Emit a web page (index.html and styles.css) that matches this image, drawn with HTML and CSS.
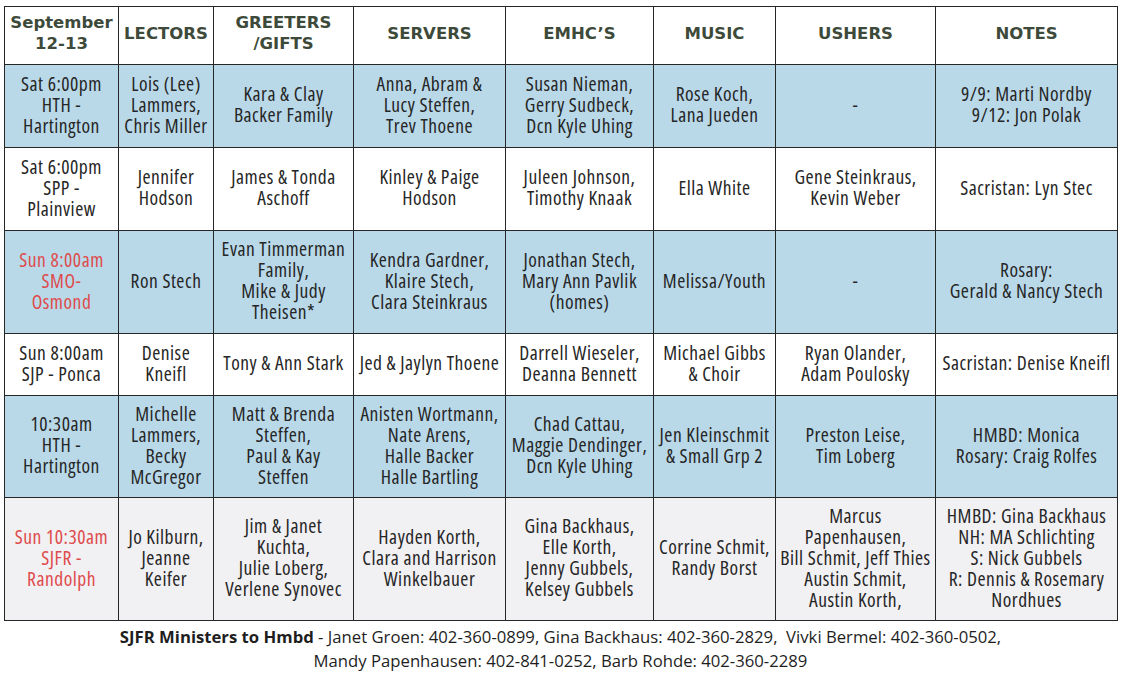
FILE: index.html
```html
<!DOCTYPE html>
<html>
<head>
<meta charset="utf-8">
<link rel="stylesheet" href="styles.css">
</head>
<body>
<div class="page">
<table class="sched">
  <colgroup>
    <col class="c1"><col class="c2"><col class="c3"><col class="c4"><col class="c5"><col class="c6"><col class="c7"><col class="c8">
  </colgroup>
  <thead>
    <tr class="r-head">
      <th>September<br>12-13</th>
      <th>LECTORS</th>
      <th>GREETERS<br>/GIFTS</th>
      <th>SERVERS</th>
      <th>EMHC’S</th>
      <th>MUSIC</th>
      <th>USHERS</th>
      <th>NOTES</th>
    </tr>
  </thead>
  <tbody>
    <tr class="blue r1">
      <td>Sat 6:00pm<br>HTH -<br>Hartington</td>
      <td>Lois (Lee)<br>Lammers,<br>Chris Miller</td>
      <td>Kara &amp; Clay<br>Backer Family</td>
      <td>Anna, Abram &amp;<br>Lucy Steffen,<br>Trev Thoene</td>
      <td>Susan Nieman,<br>Gerry Sudbeck,<br>Dcn Kyle Uhing</td>
      <td>Rose Koch,<br>Lana Jueden</td>
      <td>-</td>
      <td>9/9: Marti Nordby<br>9/12: Jon Polak</td>
    </tr>
    <tr class="white r2">
      <td>Sat 6:00pm<br>SPP -<br>Plainview</td>
      <td>Jennifer<br>Hodson</td>
      <td>James &amp; Tonda<br>Aschoff</td>
      <td>Kinley &amp; Paige<br>Hodson</td>
      <td>Juleen Johnson,<br>Timothy Knaak</td>
      <td>Ella White</td>
      <td>Gene Steinkraus,<br>Kevin Weber</td>
      <td>Sacristan: Lyn Stec</td>
    </tr>
    <tr class="blue r3">
      <td class="red">Sun 8:00am<br>SMO-<br>Osmond</td>
      <td>Ron Stech</td>
      <td>Evan Timmerman<br>Family,<br>Mike &amp; Judy<br>Theisen*</td>
      <td>Kendra Gardner,<br>Klaire Stech,<br>Clara Steinkraus</td>
      <td>Jonathan Stech,<br>Mary Ann Pavlik<br>(homes)</td>
      <td>Melissa/Youth</td>
      <td>-</td>
      <td>Rosary:<br>Gerald &amp; Nancy Stech</td>
    </tr>
    <tr class="white r4">
      <td>Sun 8:00am<br>SJP - Ponca</td>
      <td>Denise<br>Kneifl</td>
      <td>Tony &amp; Ann Stark</td>
      <td>Jed &amp; Jaylyn Thoene</td>
      <td>Darrell Wieseler,<br>Deanna Bennett</td>
      <td>Michael Gibbs<br>&amp; Choir</td>
      <td>Ryan Olander,<br>Adam Poulosky</td>
      <td>Sacristan: Denise Kneifl</td>
    </tr>
    <tr class="blue r5">
      <td>10:30am<br>HTH -<br>Hartington</td>
      <td>Michelle<br>Lammers,<br>Becky<br>McGregor</td>
      <td>Matt &amp; Brenda<br>Steffen,<br>Paul &amp; Kay<br>Steffen</td>
      <td>Anisten Wortmann,<br>Nate Arens,<br>Halle Backer<br>Halle Bartling</td>
      <td>Chad Cattau,<br>Maggie Dendinger,<br>Dcn Kyle Uhing</td>
      <td>Jen Kleinschmit<br>&amp; Small Grp 2</td>
      <td>Preston Leise,<br>Tim Loberg</td>
      <td>HMBD: Monica<br>Rosary: Craig Rolfes</td>
    </tr>
    <tr class="gray r6">
      <td class="red">Sun 10:30am<br>SJFR -<br>Randolph</td>
      <td>Jo Kilburn,<br>Jeanne<br>Keifer</td>
      <td>Jim &amp; Janet<br>Kuchta,<br>Julie Loberg,<br>Verlene Synovec</td>
      <td>Hayden Korth,<br>Clara and Harrison<br>Winkelbauer</td>
      <td>Gina Backhaus,<br>Elle Korth,<br>Jenny Gubbels,<br>Kelsey Gubbels</td>
      <td>Corrine Schmit,<br>Randy Borst</td>
      <td>Marcus<br>Papenhausen,<br>Bill Schmit, Jeff Thies<br>Austin Schmit,<br>Austin Korth,</td>
      <td>HMBD: Gina Backhaus<br>NH: MA Schlichting<br>S: Nick Gubbels<br>R: Dennis &amp; Rosemary<br>Nordhues</td>
    </tr>
  </tbody>
</table>
<div class="footer">
  <p><b>SJFR Ministers to Hmbd</b> - Janet Groen: 402-360-0899, Gina Backhaus: 402-360-2829,&nbsp; Vivki Bermel: 402-360-0502,</p>
  <p>Mandy Papenhausen: 402-841-0252, Barb Rohde: 402-360-2289</p>
</div>
</div>
</body>
</html>
```

FILE: styles.css
```css
html, body {
  margin: 0;
  padding: 0;
  background: #ffffff;
}

.page {
  padding: 6px 0 0 4px;
  width: 1113px;
}

.sched {
  border-collapse: collapse;
  table-layout: fixed;
  width: 1113px;
  font-family: "Open Sans", "Noto Sans", sans-serif;
  font-stretch: 75%;
  font-size: 19.5px;
  line-height: 21px;
  letter-spacing: 0.5px;
  color: #262626;
}

.c1 { width: 114px; }
.c2 { width: 95px; }
.c3 { width: 140px; }
.c4 { width: 152px; }
.c5 { width: 148px; }
.c6 { width: 122px; }
.c7 { width: 160px; }
.c8 { width: 182px; }

.sched th,
.sched td {
  border: 1.5px solid #262626;
  text-align: center;
  vertical-align: middle;
  padding: 0 0 4px 0;
  white-space: nowrap;
}

.sched th {
  font-family: "DejaVu Sans", sans-serif;
  font-stretch: normal;
  font-weight: bold;
  font-size: 16.5px;
  line-height: 21px;
  letter-spacing: 0;
  color: #3d4a3a;
  background: #ffffff;
  padding-bottom: 5px;
}

.r-head { height: 58px; }
.r1 { height: 83px; }
.r2 { height: 83px; }
.r3 { height: 103px; }
.r4 { height: 62px; }
.r5 { height: 102px; }
.r6 { height: 123px; }

.blue td { background: #b9d9e9; }
.white td { background: #ffffff; }
.gray td { background: #f1f0f3; }

.sched td.red { color: #df4b4b; }

.footer {
  margin-top: 4px;
  text-align: center;
  font-family: "Open Sans", "Noto Sans", sans-serif;
  font-size: 16.7px;
  line-height: 24px;
  color: #1e1e1e;
}

.footer p {
  margin: 0;
}

.footer b {
  font-weight: bold;
}
```
